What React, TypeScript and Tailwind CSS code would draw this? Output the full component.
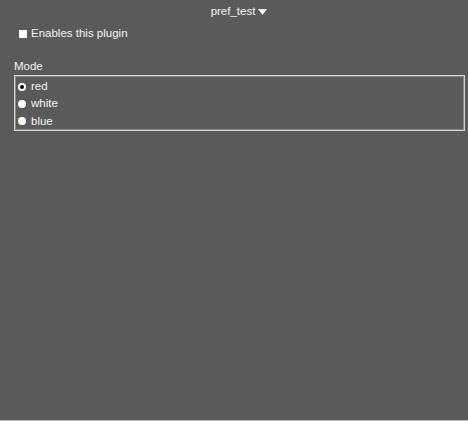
import React, { useState } from 'react';

const modes = ['red', 'white', 'blue'];

const App: React.FC = () => {
  const [enabled, setEnabled] = useState(false);
  const [mode, setMode] = useState('red');

  return (
    <div
      className="w-[468px] h-[421px] bg-[#5a5a5a] text-[#f4f4f4] flex flex-col border-b border-[#b8b8b8]"
      style={{ fontFamily: '"Liberation Sans", Arial, sans-serif' }}
    >
      <div className="h-[23px] flex items-center justify-center gap-[3px] text-[11.5px] pt-[1px] pl-[10px]">
        <span>pref_test</span>
        <svg width="9" height="6" viewBox="0 0 9 6">
          <path d="M0 0 L9 0 L4.5 6 Z" fill="#f4f4f4" />
        </svg>
      </div>

      <label
        className="flex items-center gap-[4px] pl-[19px] mt-[6px] h-[10px] text-[11.5px] cursor-pointer"
        onClick={() => setEnabled(v => !v)}
      >
        <span className="w-[8px] h-[8px] bg-white flex items-center justify-center">
          {enabled && <span className="w-[4px] h-[4px] bg-black" />}
        </span>
        <span>Enables this plugin</span>
      </label>

      <div className="pl-[14px] mt-[20px] text-[11.5px] leading-[14px]">Mode</div>

      <div className="ml-[14px] mr-[3px] mt-[2px] h-[56px] border border-[#d4d4d4] shadow-[inset_0_0_0_1px_#8a8a8a] flex flex-col pt-[2px]">
        {modes.map(m => (
          <div
            key={m}
            className="h-[18px] flex items-center gap-[5px] pl-[3px] text-[11.5px] cursor-pointer"
            onClick={() => setMode(m)}
          >
            <span className="w-[8px] h-[8px] rounded-full bg-white flex items-center justify-center">
              {mode === m && <span className="w-[4px] h-[4px] rounded-full bg-black" />}
            </span>
            <span>{m}</span>
          </div>
        ))}
      </div>
    </div>
  );
};

export default App;
